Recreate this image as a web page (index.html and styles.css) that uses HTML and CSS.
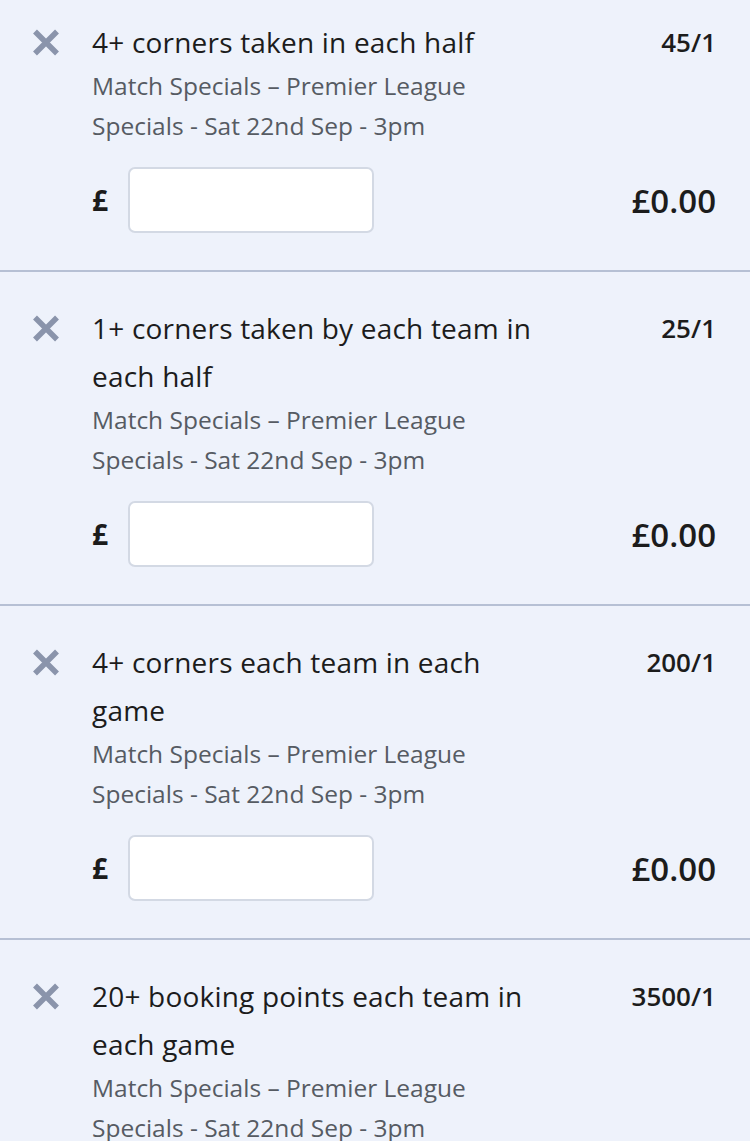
FILE: index.html
```html
<!DOCTYPE html>
<html lang="en">
<head>
    <meta charset="UTF-8">
    <meta name="viewport" content="width=device-width, initial-scale=1.0">
    <title>Bet Slip</title>
    <link rel="stylesheet" href="styles.css">
</head>
<body>
    <div class="bet-list">
        <div class="bet">
            <div class="bet-head">
                <span class="remove"><svg width="28" height="27" viewBox="0 0 28 27"><path d="M3 2.5 L25 24.5 M25 2.5 L3 24.5" stroke="#8a94ab" stroke-width="5.5"/></svg></span>
                <div class="bet-info">
                    <div class="bet-title">4+ corners taken in each half</div>
                    <div class="bet-market">Match Specials – Premier League Specials - Sat 22nd Sep - 3pm</div>
                </div>
                <div class="odds">45/1</div>
            </div>
            <div class="stake-row">
                <span class="currency">£</span>
                <input type="text" class="stake-input">
                <span class="returns">£0.00</span>
            </div>
        </div>

        <div class="bet">
            <div class="bet-head">
                <span class="remove"><svg width="28" height="27" viewBox="0 0 28 27"><path d="M3 2.5 L25 24.5 M25 2.5 L3 24.5" stroke="#8a94ab" stroke-width="5.5"/></svg></span>
                <div class="bet-info">
                    <div class="bet-title">1+ corners taken by each team in each half</div>
                    <div class="bet-market">Match Specials – Premier League Specials - Sat 22nd Sep - 3pm</div>
                </div>
                <div class="odds">25/1</div>
            </div>
            <div class="stake-row">
                <span class="currency">£</span>
                <input type="text" class="stake-input">
                <span class="returns">£0.00</span>
            </div>
        </div>

        <div class="bet">
            <div class="bet-head">
                <span class="remove"><svg width="28" height="27" viewBox="0 0 28 27"><path d="M3 2.5 L25 24.5 M25 2.5 L3 24.5" stroke="#8a94ab" stroke-width="5.5"/></svg></span>
                <div class="bet-info">
                    <div class="bet-title">4+ corners each team in each game</div>
                    <div class="bet-market">Match Specials – Premier League Specials - Sat 22nd Sep - 3pm</div>
                </div>
                <div class="odds">200/1</div>
            </div>
            <div class="stake-row">
                <span class="currency">£</span>
                <input type="text" class="stake-input">
                <span class="returns">£0.00</span>
            </div>
        </div>

        <div class="bet">
            <div class="bet-head">
                <span class="remove"><svg width="28" height="27" viewBox="0 0 28 27"><path d="M3 2.5 L25 24.5 M25 2.5 L3 24.5" stroke="#8a94ab" stroke-width="5.5"/></svg></span>
                <div class="bet-info">
                    <div class="bet-title">20+ booking points each team in each game</div>
                    <div class="bet-market">Match Specials – Premier League Specials - Sat 22nd Sep - 3pm</div>
                </div>
                <div class="odds">3500/1</div>
            </div>
        </div>
    </div>
</body>
</html>
```

FILE: styles.css
```css
body {
    margin: 0;
    background-color: #eef2fb;
    font-family: 'Open Sans', 'Noto Sans', sans-serif;
    color: #1c1c1c;
    overflow: hidden;
}
.bet-list {
    margin-top: -14px;
}
.bet {
    padding: 32px 34px 37px 32px;
    border-bottom: 2px solid #b6c0d4;
}
.bet-head {
    display: flex;
    align-items: flex-start;
}
.remove {
    width: 28px;
    height: 48px;
    display: flex;
    align-items: center;
    margin-right: 32px;
    flex-shrink: 0;
}
.bet-info {
    width: 450px;
}
.bet-title {
    font-size: 28px;
    line-height: 48px;
    letter-spacing: 0.2px;
}
.bet-market {
    font-size: 24.5px;
    line-height: 40px;
    color: #565b63;
    width: 400px;
}
.odds {
    margin-left: auto;
    font-size: 26px;
    font-weight: 600;
    line-height: 48px;
}
.stake-row {
    display: flex;
    align-items: center;
    padding-left: 60px;
    margin-top: 21px;
}
.currency {
    font-size: 28px;
    font-weight: 700;
    width: 36px;
}
.stake-input {
    width: 246px;
    height: 66px;
    box-sizing: border-box;
    border: 2px solid #d3d9e4;
    border-radius: 7px;
    background: #fff;
    margin: 0;
}
.returns {
    margin-left: auto;
    font-size: 33px;
    font-weight: 600;
}
```
